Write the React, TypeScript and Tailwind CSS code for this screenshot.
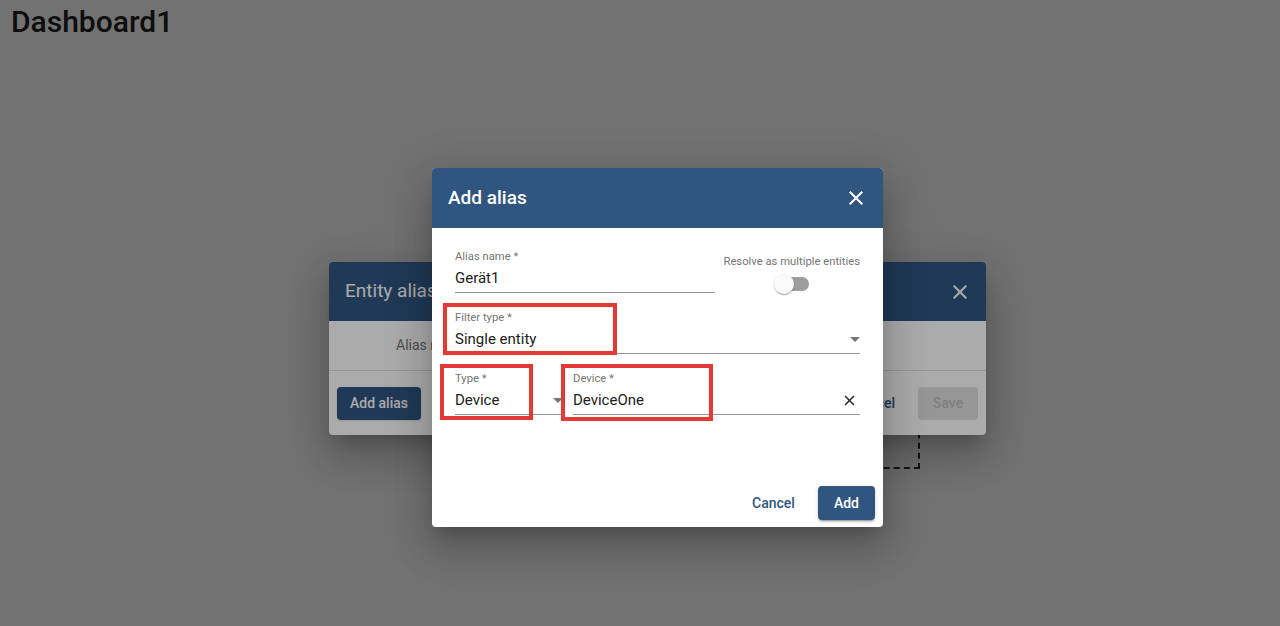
import React from 'react';

// Material "close" glyph, used for both dialog headers and the clear button.
const CloseIcon: React.FC<{ className?: string }> = ({ className }) => (
  <svg viewBox="0 0 24 24" className={className} fill="currentColor" aria-hidden="true">
    <path d="M19 6.41 17.59 5 12 10.59 6.41 5 5 6.41 10.59 12 5 17.59 6.41 19 12 13.41 17.59 19 19 17.59 13.41 12z" />
  </svg>
);

const Caret: React.FC = () => (
  <svg viewBox="0 0 10 5" className="w-[10px] h-[5px] text-[#757575]" fill="currentColor" aria-hidden="true">
    <path d="M0 0h10L5 5z" />
  </svg>
);

type FieldProps = {
  label: string;
  value: string;
  className?: string;
  trailing?: React.ReactNode;
};

const Field: React.FC<FieldProps> = ({ label, value, className, trailing }) => (
  <div className={`h-[43px] border-b border-[#949494] ${className ?? ''}`}>
    <div className="text-[11.25px] leading-[14px] text-[#757575] whitespace-nowrap">{label}</div>
    <div className="mt-[4px] flex items-center h-[20px]">
      <span className="flex-1 text-[15px] leading-[20px] text-[#212121] whitespace-nowrap">{value}</span>
      {trailing}
    </div>
  </div>
);

// The red annotation frames drawn on top of the screenshot.
const Marker: React.FC<{ className: string }> = ({ className }) => (
  <div className={`absolute border-[4px] border-[#e53935] ${className}`} />
);

export default function App() {
  return (
    <div className="relative w-full h-[626px] overflow-hidden bg-white font-['Roboto',sans-serif]">
      <h1 className="pl-[11px] pt-[6px] text-[30px] leading-[32px] font-medium text-[#212121]">Dashboard1</h1>

      {/* dashboard widget placeholder on the canvas */}
      <div className="absolute left-[600px] top-[300px] w-[320px] h-[169px] border-2 border-dashed border-[#333]" />

      {/* first backdrop + Entity aliases dialog */}
      <div className="absolute inset-0 bg-black/[0.33] flex items-center justify-center pl-[35px] pt-[71px]">
        <div className="w-[657px] h-[173px] rounded-[4px] bg-white flex flex-col overflow-hidden shadow-[0_11px_15px_-7px_rgba(0,0,0,0.2),0_24px_38px_3px_rgba(0,0,0,0.14),0_9px_46px_8px_rgba(0,0,0,0.12)]">
          <div className="h-[59px] bg-[#305680] flex items-center justify-between pl-4 pr-[14px]">
            <span className="text-[19px] font-normal text-white">Entity aliases</span>
            <CloseIcon className="w-6 h-6 text-white" />
          </div>
          <div className="h-[50px] flex items-center pl-[67px] text-[14px] text-[#757575] border-b border-[#e0e0e0]">
            Alias name
          </div>
          <div className="flex-1 flex items-center justify-between px-2">
            <button className="h-[33px] px-[13px] rounded-[4px] bg-[#305680] text-white text-[14px] font-medium shadow">
              Add alias
            </button>
            <div className="flex items-center gap-[7px]">
              <button className="h-[33px] px-4 text-[14px] font-medium text-[#305680]">Cancel</button>
              <button className="h-[33px] w-[60px] rounded-[4px] bg-[#e0e0e0] text-[14px] font-medium text-[#bdbdbd]">
                Save
              </button>
            </div>
          </div>
        </div>
      </div>

      {/* second backdrop + Add alias dialog */}
      <div className="absolute inset-0 bg-black/[0.33] flex items-center justify-center pl-[35px] pt-[69px]">
        <div className="relative w-[451px] h-[359px] rounded-[4px] bg-white flex flex-col overflow-hidden shadow-[0_11px_15px_-7px_rgba(0,0,0,0.2),0_24px_38px_3px_rgba(0,0,0,0.14),0_9px_46px_8px_rgba(0,0,0,0.12)]">
          <div className="h-[60px] bg-[#305680] flex items-center justify-between pl-4 pr-[15px]">
            <span className="text-[19px] font-medium text-white">Add alias</span>
            <CloseIcon className="w-6 h-6 text-white" />
          </div>

          <div className="flex flex-col gap-[18px] px-[23px] pt-[22px]">
            <div className="h-[43px] flex items-start justify-between">
              <Field label="Alias name *" value="Gerät1" className="w-[260px] shrink-0" />
              <div className="flex flex-col items-center pt-[5px]">
                <span className="text-[11.25px] leading-[14px] text-[#757575] whitespace-nowrap">Resolve as multiple entities</span>
                <div className="mt-[5px] relative w-[34px] h-[20px] flex items-center">
                  <div className="w-[34px] h-[14px] rounded-full bg-[#9e9e9e]" />
                  <div className="absolute -left-[1px] top-0 w-[20px] h-[20px] rounded-full bg-[#fafafa] shadow-[0_2px_1px_-1px_rgba(0,0,0,0.2),0_1px_1px_0_rgba(0,0,0,0.14),0_1px_3px_0_rgba(0,0,0,0.12)]" />
                </div>
              </div>
            </div>

            <Field label="Filter type *" value="Single entity" trailing={<Caret />} />

            <div className="flex items-start gap-[10px]">
              <Field label="Type *" value="Device" className="w-[108px] shrink-0" trailing={<Caret />} />
              <Field
                label="Device *"
                value="DeviceOne"
                className="flex-1"
                trailing={<CloseIcon className="w-[17px] h-[17px] mr-[2px] text-[#212121]" />}
              />
            </div>
          </div>

          <div className="mt-auto flex items-center justify-end gap-[7px] pr-[8px] pb-[7px]">
            <button className="h-[34px] px-4 text-[14px] font-medium text-[#305680]">Cancel</button>
            <button className="h-[34px] px-4 rounded-[4px] bg-[#305680] text-white text-[14px] font-medium shadow-[0_3px_1px_-2px_rgba(0,0,0,0.2),0_2px_2px_0_rgba(0,0,0,0.14),0_1px_5px_0_rgba(0,0,0,0.12)]">
              Add
            </button>
          </div>

          <Marker className="left-[11px] top-[135px] w-[174px] h-[52px]" />
          <Marker className="left-[8px] top-[196px] w-[93px] h-[56px]" />
          <Marker className="left-[129px] top-[196px] w-[152px] h-[57px]" />
        </div>
      </div>
    </div>
  );
}
